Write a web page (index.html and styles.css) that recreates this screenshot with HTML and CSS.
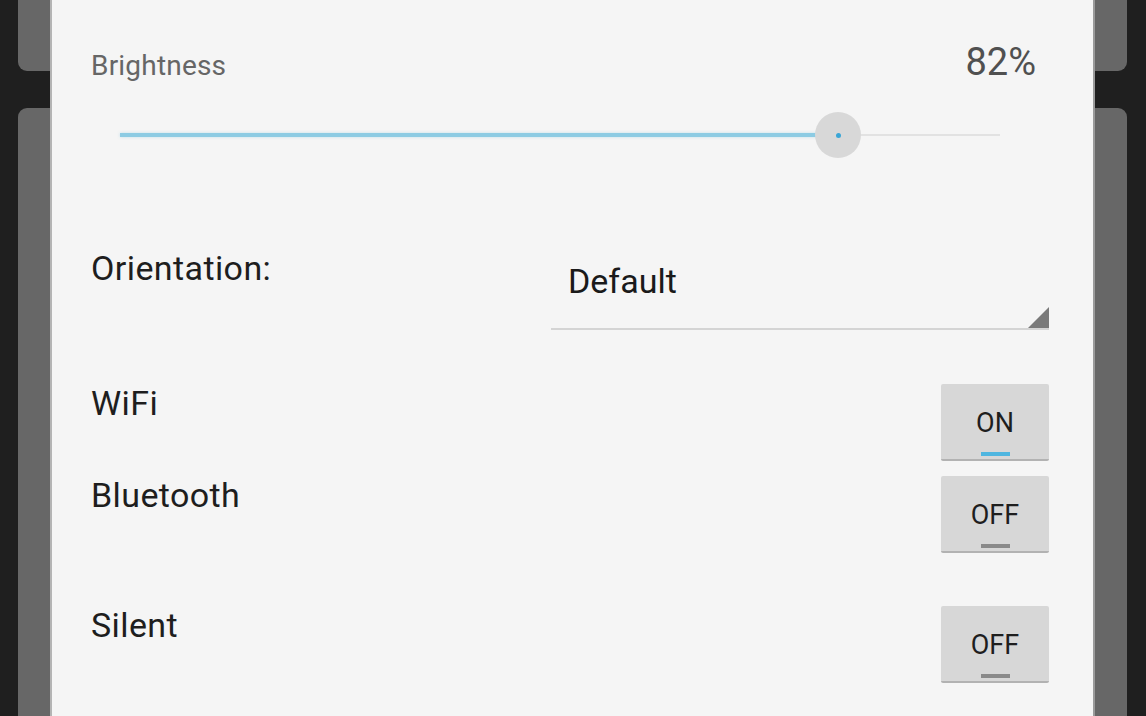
FILE: index.html
```html
<!DOCTYPE html>
<html>
<head>
<meta charset="utf-8">
<link rel="stylesheet" href="styles.css">
</head>
<body>
<div class="screen">
  <div class="edge"></div>
  <div class="side side-left">
    <div class="card card-top"></div>
    <div class="card card-bottom"></div>
  </div>
  <main class="dialog">
    <div class="bright-row">
      <span class="bright-label">Brightness</span>
      <span class="bright-value">82%</span>
    </div>
    <div class="slider">
      <div class="track">
        <div class="track-on" style="width:81.6%"></div>
        <div class="track-off"></div>
      </div>
      <div class="thumb" style="left:81.6%"><span class="thumb-dot"></span></div>
    </div>
    <div class="orient-row">
      <span class="label">Orientation:</span>
      <div class="spinner">
        <span class="spinner-text">Default</span>
        <span class="spinner-corner"></span>
      </div>
    </div>
    <div class="toggle-row row-wifi">
      <span class="label toggle-label">WiFi</span>
      <button class="toggle on"><span class="toggle-text">ON</span><span class="toggle-bar"></span></button>
    </div>
    <div class="toggle-row row-bt">
      <span class="label toggle-label">Bluetooth</span>
      <button class="toggle"><span class="toggle-text">OFF</span><span class="toggle-bar"></span></button>
    </div>
    <div class="toggle-row row-silent">
      <span class="label toggle-label">Silent</span>
      <button class="toggle"><span class="toggle-text">OFF</span><span class="toggle-bar"></span></button>
    </div>
  </main>
  <div class="side side-right">
    <div class="card card-top"></div>
    <div class="card card-bottom"></div>
  </div>
  <div class="edge"></div>
</div>
</body>
</html>
```

FILE: styles.css
```css
* { box-sizing: border-box; }
html, body {
  margin: 0;
  padding: 0;
  background: #1f1f1f;
  height: 716px;
  overflow: hidden;
  font-family: Roboto, "Liberation Sans", sans-serif;
}
.screen {
  display: flex;
  width: 1146px;
  height: 716px;
}
.edge {
  flex: 1 1 auto;
  background: #1f1f1f;
}
.edge:first-child { flex: 0 0 18px; }
.side {
  flex: 0 0 32px;
  display: flex;
  flex-direction: column;
}
.card {
  background: #676767;
}
.card-top { height: 71px; }
.card-bottom { margin-top: 37px; flex: 1 1 auto; }
.side-left .card-top { border-bottom-left-radius: 9px; }
.side-left .card-bottom { border-top-left-radius: 9px; }
.side-right .card-top { border-bottom-right-radius: 9px; }
.side-right .card-bottom { border-top-right-radius: 9px; }

.dialog {
  flex: 0 0 1045px;
  background: #f5f5f5;
  border-left: 2px solid #b4b4b4;
  border-right: 2px solid #9a9a9a;
  padding: 43px 44px 0 39px;
  display: flex;
  flex-direction: column;
}

.bright-row {
  display: flex;
  justify-content: space-between;
  align-items: baseline;
  padding-right: 13px;
}
.bright-label {
  font-size: 28px;
  line-height: 28px;
  color: #666;
  letter-spacing: 0.2px;
}
.bright-value {
  font-size: 38px;
  line-height: 38px;
  color: #505050;
}

.slider {
  position: relative;
  height: 46px;
  margin: 31px 49px 0 29px;
  display: flex;
  align-items: center;
}
.track {
  display: flex;
  align-items: center;
  width: 100%;
}
.track-on {
  height: 4px;
  background: #8ccbe3;
  box-shadow: 0 0 3px rgba(140, 203, 227, 0.5);
}
.track-off {
  flex: 1 1 auto;
  height: 2px;
  background: #e2e2e2;
}
.thumb {
  position: absolute;
  top: 0;
  width: 46px;
  height: 46px;
  margin-left: -23px;
  border-radius: 50%;
  background: #d8d8d8;
  display: flex;
  align-items: center;
  justify-content: center;
}
.thumb-dot {
  width: 5px;
  height: 5px;
  border-radius: 50%;
  background: #3aa6d6;
}

.label {
  font-size: 34px;
  line-height: 34px;
  letter-spacing: 0.4px;
  color: #1e1e1e;
}

.orient-row {
  display: flex;
  align-items: flex-start;
  justify-content: space-between;
  margin-top: 93px;
}
.spinner {
  position: relative;
  width: 498px;
  height: 79px;
  padding: 13px 0 0 17px;
  border-bottom: 2px solid #d4d4d4;
}
.spinner-text {
  font-size: 34px;
  line-height: 34px;
  color: #1a1a1a;
}
.spinner-corner {
  position: absolute;
  right: 0;
  bottom: 0;
  width: 21px;
  height: 21px;
  background: #7a7a7a;
  clip-path: polygon(100% 0, 100% 100%, 0 100%);
}

.toggle-row {
  display: flex;
  align-items: flex-start;
  justify-content: space-between;
}
.row-wifi { margin-top: 54px; }
.row-bt { margin-top: 15px; }
.row-silent { margin-top: 53px; }
.toggle-label { margin-top: 2px; }

.toggle {
  width: 108px;
  height: 77px;
  border: none;
  border-bottom: 2px solid #b2b2b2;
  border-radius: 2px;
  background: #d7d7d7;
  padding: 26px 0 0;
  display: flex;
  flex-direction: column;
  align-items: center;
  font-family: Roboto, "Liberation Sans", sans-serif;
}
.toggle-text {
  font-size: 27px;
  line-height: 27px;
  color: #1e1e1e;
}
.toggle-bar {
  margin-top: 15px;
  width: 29px;
  height: 4px;
  background: #8a8a8a;
}
.toggle.on .toggle-bar { background: #4fb6e0; }
```
